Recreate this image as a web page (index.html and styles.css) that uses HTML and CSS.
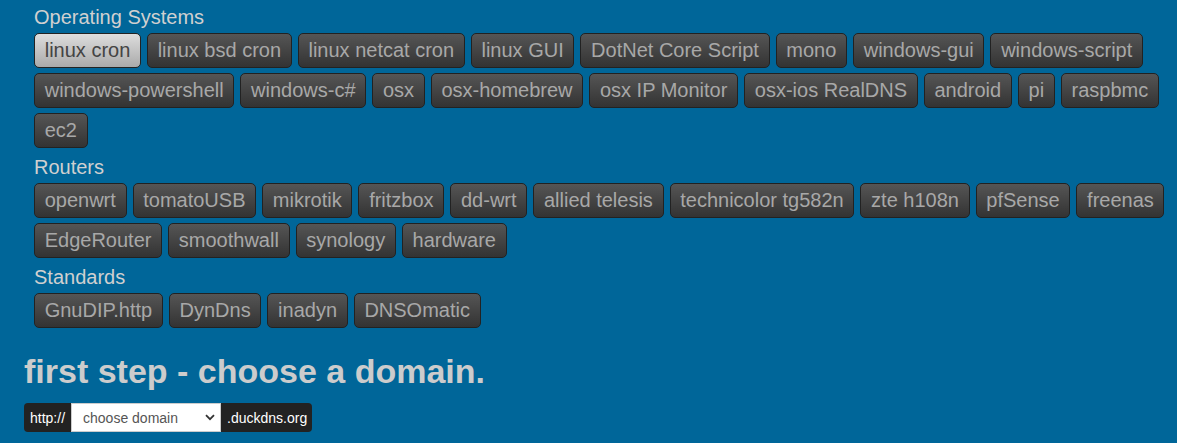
FILE: index.html
```html
<!DOCTYPE html>
<html>
<head>
<meta charset="utf-8">
<link rel="stylesheet" href="styles.css">
</head>
<body>
<div class="page">
  <div class="groups">
    <div class="group">
      <div class="group-title">Operating Systems</div>
      <div class="btns">
        <button class="btn active">linux cron</button>
        <button class="btn">linux bsd cron</button>
        <button class="btn">linux netcat cron</button>
        <button class="btn">linux GUI</button>
        <button class="btn">DotNet Core Script</button>
        <button class="btn">mono</button>
        <button class="btn">windows-gui</button>
        <button class="btn">windows-script</button>
        <button class="btn">windows-powershell</button>
        <button class="btn">windows-c#</button>
        <button class="btn">osx</button>
        <button class="btn">osx-homebrew</button>
        <button class="btn">osx IP Monitor</button>
        <button class="btn">osx-ios RealDNS</button>
        <button class="btn">android</button>
        <button class="btn">pi</button>
        <button class="btn">raspbmc</button>
        <button class="btn">ec2</button>
      </div>
    </div>
    <div class="group">
      <div class="group-title">Routers</div>
      <div class="btns">
        <button class="btn">openwrt</button>
        <button class="btn">tomatoUSB</button>
        <button class="btn">mikrotik</button>
        <button class="btn">fritzbox</button>
        <button class="btn">dd-wrt</button>
        <button class="btn">allied telesis</button>
        <button class="btn">technicolor tg582n</button>
        <button class="btn">zte h108n</button>
        <button class="btn">pfSense</button>
        <button class="btn">freenas</button>
        <button class="btn">EdgeRouter</button>
        <button class="btn">smoothwall</button>
        <button class="btn">synology</button>
        <button class="btn">hardware</button>
      </div>
    </div>
    <div class="group">
      <div class="group-title">Standards</div>
      <div class="btns">
        <button class="btn">GnuDIP.http</button>
        <button class="btn">DynDns</button>
        <button class="btn">inadyn</button>
        <button class="btn">DNSOmatic</button>
      </div>
    </div>
  </div>
  <h1 class="step">first step - choose a domain.</h1>
  <div class="domain-row">
    <span class="addon left">http://</span>
    <div class="select-wrap">
      <select class="domain-select">
        <option>choose domain</option>
      </select>
      <svg class="chevron" width="10" height="7" viewBox="0 0 10 7"><path d="M1 1.2 L5 5.2 L9 1.2" fill="none" stroke="#333" stroke-width="1.8"/></svg>
    </div>
    <span class="addon right">.duckdns.org</span>
  </div>
</div>
</body>
</html>
```
FILE: styles.css
```css
html, body {
  margin: 0;
  padding: 0;
  background: #006699;
}
body {
  font-family: "Liberation Sans", Arial, sans-serif;
}
.page {
  padding: 6px 2px 0 24px;
}
.groups {
  padding-left: 10px;
}
.group {
  margin-bottom: 8px;
}
.group-title {
  font-size: 20px;
  line-height: 23px;
  color: #d0d0d0;
}
.btns {
  display: flex;
  flex-wrap: wrap;
  column-gap: 6px;
  row-gap: 5px;
  margin-top: 4px;
}
.btn {
  font-family: "Liberation Sans", Arial, sans-serif;
  font-size: 20px;
  line-height: 23px;
  padding: 5px 9.7px;
  border: 1px solid #222;
  border-radius: 5px;
  background: linear-gradient(#555555, #333333);
  color: #a8a8a8;
  margin: 0;
}
.btn.active {
  background: linear-gradient(#dddddd, #aaaaaa);
  color: #444;
}
.step {
  font-size: 34px;
  line-height: 39px;
  font-weight: bold;
  color: #cccccc;
  margin: 24px 0 12px 0;
}
.domain-row {
  display: flex;
  height: 29px;
  font-size: 14px;
}
.addon {
  background: #222;
  color: #fff;
  display: flex;
  align-items: center;
}
.addon.left {
  border-radius: 4px 0 0 4px;
  padding: 0 6px;
}
.addon.right {
  border-radius: 0 4px 4px 0;
  padding: 0 5px 0 6px;
}
.select-wrap {
  position: relative;
  width: 150px;
}
.domain-select {
  appearance: none;
  -webkit-appearance: none;
  width: 100%;
  height: 100%;
  box-sizing: border-box;
  border: 1px solid #cccccc;
  border-radius: 0;
  background: #fff;
  color: #555;
  font-family: "Liberation Sans", Arial, sans-serif;
  font-size: 14px;
  padding: 0 0 0 11px;
  margin: 0;
}
.chevron {
  position: absolute;
  right: 6px;
  top: 11px;
  pointer-events: none;
}
```
